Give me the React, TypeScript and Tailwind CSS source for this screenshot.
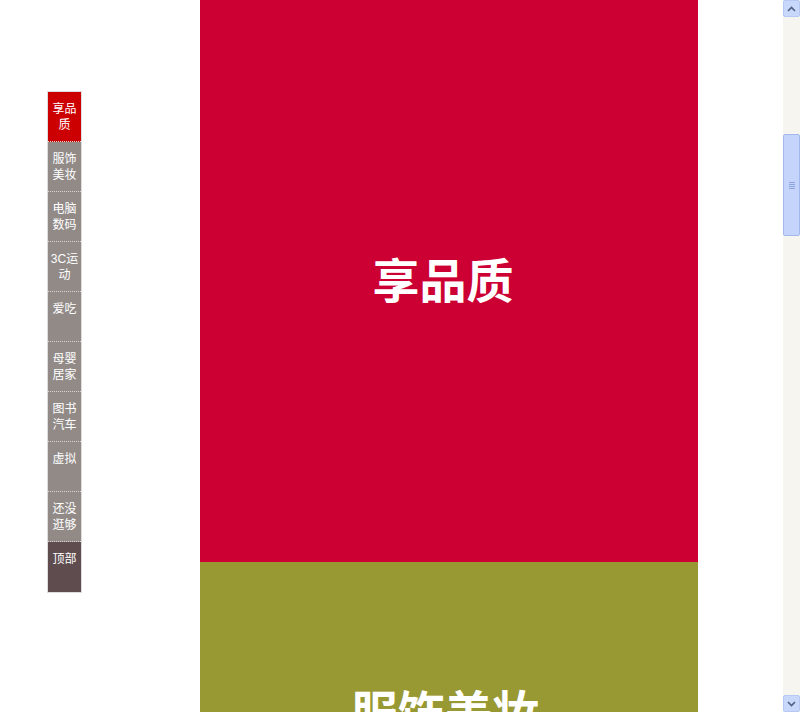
const navItems = [
  { label: '享品质', active: true },
  { label: '服饰美妆' },
  { label: '电脑数码' },
  { label: '3C运动' },
  { label: '爱吃' },
  { label: '母婴居家' },
  { label: '图书汽车' },
  { label: '虚拟' },
  { label: '还没逛够' },
  { label: '顶部', top: true },
]

function Scrollbar() {
  return (
    <div className="flex h-[712px] w-[17px] shrink-0 flex-col bg-[#f6f5f0]">
      <div className="flex h-[17px] items-center justify-center rounded-[2px] border border-[#b6c8f4] bg-[#c8d8fb]">
        <svg width="9" height="6" viewBox="0 0 9 6">
          <path d="M1 5 L4.5 1.5 L8 5" fill="none" stroke="#4d6185" strokeWidth="1.6" />
        </svg>
      </div>
      <div className="h-[117px]" />
      <div className="flex h-[102px] items-center justify-center rounded-[2px] border border-[#a3b8ee] bg-[#c4d4fb]">
        <div className="flex flex-col gap-[1px]">
          <div className="h-px w-[6px] bg-[#8da4de]" />
          <div className="h-px w-[6px] bg-[#8da4de]" />
          <div className="h-px w-[6px] bg-[#8da4de]" />
          <div className="h-px w-[6px] bg-[#8da4de]" />
        </div>
      </div>
      <div className="flex-1" />
      <div className="flex h-[17px] items-center justify-center rounded-[2px] border border-[#b6c8f4] bg-[#c8d8fb]">
        <svg width="9" height="6" viewBox="0 0 9 6">
          <path d="M1 1 L4.5 4.5 L8 1" fill="none" stroke="#4d6185" strokeWidth="1.6" />
        </svg>
      </div>
    </div>
  )
}

export default function App() {
  return (
    <div className="relative flex h-[712px] w-[800px] overflow-hidden bg-white font-['Liberation_Sans','Noto_Sans_CJK_SC',sans-serif]">
      <div className="flex-1">
        <div className="ml-[200px] w-[498px]">
          <section className="h-[562px] bg-[#cc0033] pr-[12px] pt-[252px] text-center">
            <h2 className="text-[47px] font-bold leading-[60px] text-white">享品质</h2>
          </section>
          <section className="h-[400px] bg-[#999933] pr-[8px] pt-[122px] text-center">
            <h2 className="text-[47px] font-bold leading-[60px] text-white">服饰美妆</h2>
          </section>
        </div>
      </div>
      <Scrollbar />

      <nav className="absolute left-[47px] top-[91px] w-[35px] border border-[#dddddd]">
        {navItems.map((item) => (
          <a
            key={item.label}
            className={`block h-[50px] break-all border-b border-dotted border-[#d9d4d2] px-[2px] pt-[9px] text-center text-[12px] leading-[16px] text-white last:border-b-0 ${
              item.active ? 'bg-[#cc0000]' : item.top ? 'bg-[#5e4c4e]' : 'bg-[#918a87]'
            }`}
          >
            {item.label}
          </a>
        ))}
      </nav>
    </div>
  )
}
